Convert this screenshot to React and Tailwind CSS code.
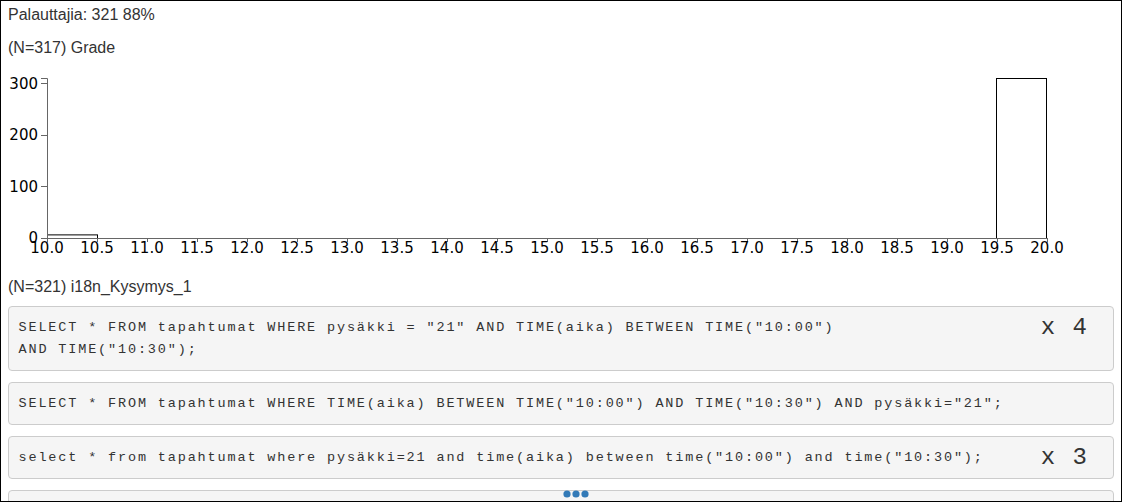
import React from "react";

const xTicks = Array.from({ length: 21 }, (_, i) => (10 + i * 0.5).toFixed(1));
const yTicks = [0, 100, 200, 300];
const yScale = (v) => 170 - (v / 310) * 160;

function Histogram() {
  const ax = 39;
  return (
    <svg width="1080" height="194" className="block mt-[10px]" style={{ fontFamily: '"DejaVu Sans", sans-serif' }}>
      {/* bars */}
      <rect x={ax + 0.5} y={yScale(7) + 0.5} width={50} height={170 - yScale(7)} fill="white" stroke="black" strokeWidth="1" />
      <rect x={ax + 949.5} y={yScale(310) + 0.5} width={50} height={170 - yScale(310)} fill="white" stroke="black" strokeWidth="1" />
      {/* y axis */}
      <path d={`M${ax - 6},10.5H${ax + 0.5}V170.5H${ax - 6}`} fill="none" stroke="#666" strokeWidth="1" />
      {yTicks.map((t) => (
        <g key={t}>
          <line x1={ax - 6} x2={ax} y1={Math.round(yScale(t)) + 0.5} y2={Math.round(yScale(t)) + 0.5} stroke="#666" />
          <text x={ax - 9} y={yScale(t)} dy="0.36em" textAnchor="end" fontSize="15" fill="black">
            {t}
          </text>
        </g>
      ))}
      {/* x axis */}
      <path d={`M${ax + 0.5},174.5V170.5H${ax + 1000.5}V174.5`} fill="none" stroke="#666" strokeWidth="1" />
      {xTicks.map((t, i) => (
        <g key={t}>
          <line x1={ax + i * 50 + 0.5} x2={ax + i * 50 + 0.5} y1={170} y2={174} stroke="#666" />
          <text x={ax + i * 50} y={185} textAnchor="middle" fontSize="15" fill="black">
            {t}
          </text>
        </g>
      ))}
    </svg>
  );
}

function CodeBox({ lines, count }) {
  return (
    <div className="flex justify-between items-start bg-[#f5f5f5] border border-[#ccc] rounded-[4px] p-[9.5px] mb-[11px] text-[#333]">
      <pre
        className="m-0 text-[13.5px] leading-[22px] tracking-[1.85px] whitespace-pre"
        style={{ fontFamily: '"Liberation Mono", "Courier New", monospace' }}
      >
        {lines.join("\n")}
      </pre>
      {count ? (
        <span
          className="text-[24px] leading-[22px] tracking-[1.5px] mr-[15px] whitespace-pre text-[#333]"
          style={{ fontFamily: '"Liberation Mono", "Courier New", monospace' }}
        >
          {count}
        </span>
      ) : null}
    </div>
  );
}

export default function App() {
  return (
    <div className="w-[1122px] h-[502px] border border-black overflow-hidden relative bg-white">
      <div className="pt-[4px] pl-[7px] pr-[7px] text-[16px] text-[#333]" style={{ fontFamily: '"Liberation Sans", Arial, sans-serif' }}>
        <div className="leading-[20px]">Palauttajia: 321 88%</div>
        <div className="leading-[20px] mt-[13px]">(N=317) Grade</div>
        <Histogram />
        <div className="leading-[20px] mt-[15px]">(N=321) i18n_Kysymys_1</div>
        <div className="mt-[9px]">
          <CodeBox
            lines={['SELECT * FROM tapahtumat WHERE pysäkki = "21" AND TIME(aika) BETWEEN TIME("10:00")', 'AND TIME("10:30");']}
            count="x 4"
          />
          <CodeBox lines={['SELECT * FROM tapahtumat WHERE TIME(aika) BETWEEN TIME("10:00") AND TIME("10:30") AND pysäkki="21";']} />
          <CodeBox
            lines={['select * from tapahtumat where pysäkki=21 and time(aika) between time("10:00") and time("10:30");']}
            count="x 3"
          />
          <CodeBox lines={["select * from tapahtumat"]} />
        </div>
      </div>
      <svg width="26" height="8" className="absolute left-[562px] top-[489px]">
        <circle cx="4" cy="4" r="3.6" fill="#337ab7" />
        <circle cx="13" cy="4" r="3.6" fill="#337ab7" />
        <circle cx="22" cy="4" r="3.6" fill="#337ab7" />
      </svg>
    </div>
  );
}
